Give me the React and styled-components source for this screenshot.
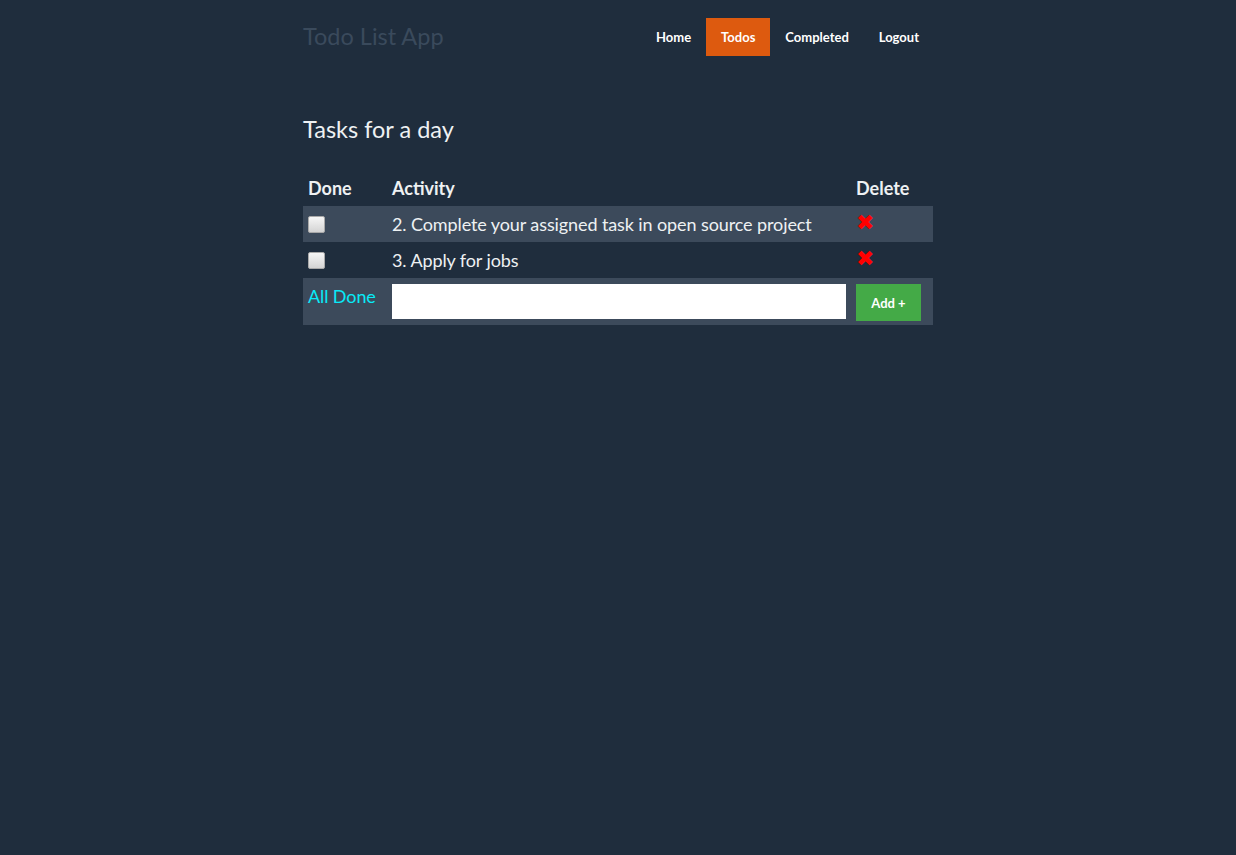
import React from 'react';
import styled, { createGlobalStyle } from 'styled-components';

const GlobalStyle = createGlobalStyle`
	html, body {
		margin: 0;
		padding: 0;
		background-color: #1f2d3d;
		font-family: Lato, 'Open Sans', 'Liberation Sans', sans-serif;
		color: #ecf0f1;
	}
`;

const Page = styled.div`
	min-height: 855px;
	background-color: #1f2d3d;
`;

const Container = styled.div`
	width: 630px;
	margin: 0 auto;
`;

const Navbar = styled.nav`
	display: flex;
	justify-content: space-between;
	align-items: center;
	padding-top: 18px;
	height: 38px;
`;

const Brand = styled.div`
	font-size: 23.5px;
	color: #3a4a5c;
	margin-top: -2px;
`;

const NavList = styled.ul`
	display: flex;
	list-style: none;
	margin: 0 -1px 0 0;
	padding: 0;
`;

const NavLink = styled.li`
	padding: 0 15px;
	height: 38px;
	line-height: 38px;
	font-size: 13px;
	font-weight: 700;
	color: #ffffff;
	background-color: ${(props) => (props.active ? '#dd5a0f' : 'transparent')};
`;

const Heading = styled.h2`
	font-size: 23.5px;
	font-weight: 400;
	color: #eef1f3;
	margin: 61px 0 0;
	line-height: 24px;
`;

const Table = styled.table`
	width: 100%;
	margin-top: 33px;
	border-collapse: collapse;
	font-size: 18px;
`;

const HeadCell = styled.th`
	text-align: left;
	font-weight: 700;
	padding: 3px 5px 7px;
	height: 20px;
	color: #eef1f3;
	width: ${(props) => props.width || 'auto'};
`;

const Row = styled.tr`
	background-color: ${(props) => (props.striped ? '#3c4a5b' : 'transparent')};
`;

const Cell = styled.td`
	padding: ${(props) => (props.footer ? '6px 5px 4px' : '5px')};
	height: 26px;
	vertical-align: ${(props) => (props.top ? 'top' : 'middle')};
	color: #eef1f3;
	letter-spacing: -0.1px;
`;

const Check = styled.input.attrs({ type: 'checkbox' })`
	appearance: none;
	display: block;
	width: 17px;
	height: 17px;
	margin: 0;
	border: 1px solid #a9a9a9;
	border-radius: 2px;
	background: linear-gradient(#f6f6f6, #d4d4d4);
	box-sizing: border-box;
`;

const DeleteMark = styled.span`
	display: block;
	color: #ff0000;
	font-size: 22px;
	line-height: 1;
	margin: -3px 0 0 0;
	font-family: 'DejaVu Sans', sans-serif;
`;

const AllDone = styled.span`
	color: #08eaf8;
	display: block;
	margin-top: 1px;
`;

const TaskInput = styled.input`
	display: block;
	width: 100%;
	height: 35px;
	box-sizing: border-box;
	border: none;
	margin: 0 0 2px;
	background: #ffffff;
`;

const AddButton = styled.button`
	display: block;
	width: 65px;
	height: 37px;
	border: none;
	background-color: #44aa47;
	color: #ffffff;
	font-family: inherit;
	font-size: 13px;
	font-weight: 700;
	margin: 0;
`;

const todos = [
	{ id: 2, text: '2. Complete your assigned task in open source project' },
	{ id: 3, text: '3. Apply for jobs' },
];

const App = () => {
	return (
		<Page>
			<GlobalStyle />
			<Container>
				<Navbar>
					<Brand>Todo List App</Brand>
					<NavList>
						<NavLink>Home</NavLink>
						<NavLink active>Todos</NavLink>
						<NavLink>Completed</NavLink>
						<NavLink>Logout</NavLink>
					</NavList>
				</Navbar>
				<Heading>Tasks for a day</Heading>
				<Table>
					<thead>
						<tr>
							<HeadCell width="74px">Done</HeadCell>
							<HeadCell>Activity</HeadCell>
							<HeadCell width="72px">Delete</HeadCell>
						</tr>
					</thead>
					<tbody>
						{todos.map((todo, i) => {
							return (
								<Row key={todo.id} striped={i % 2 === 0}>
									<Cell>
										<Check />
									</Cell>
									<Cell>{todo.text}</Cell>
									<Cell>
										<DeleteMark>✖</DeleteMark>
									</Cell>
								</Row>
							);
						})}
						<Row striped>
							<Cell footer top>
								<AllDone>All Done</AllDone>
							</Cell>
							<Cell footer>
								<TaskInput type="text" />
							</Cell>
							<Cell footer>
								<AddButton>Add +</AddButton>
							</Cell>
						</Row>
					</tbody>
				</Table>
			</Container>
		</Page>
	);
};

export default App;
